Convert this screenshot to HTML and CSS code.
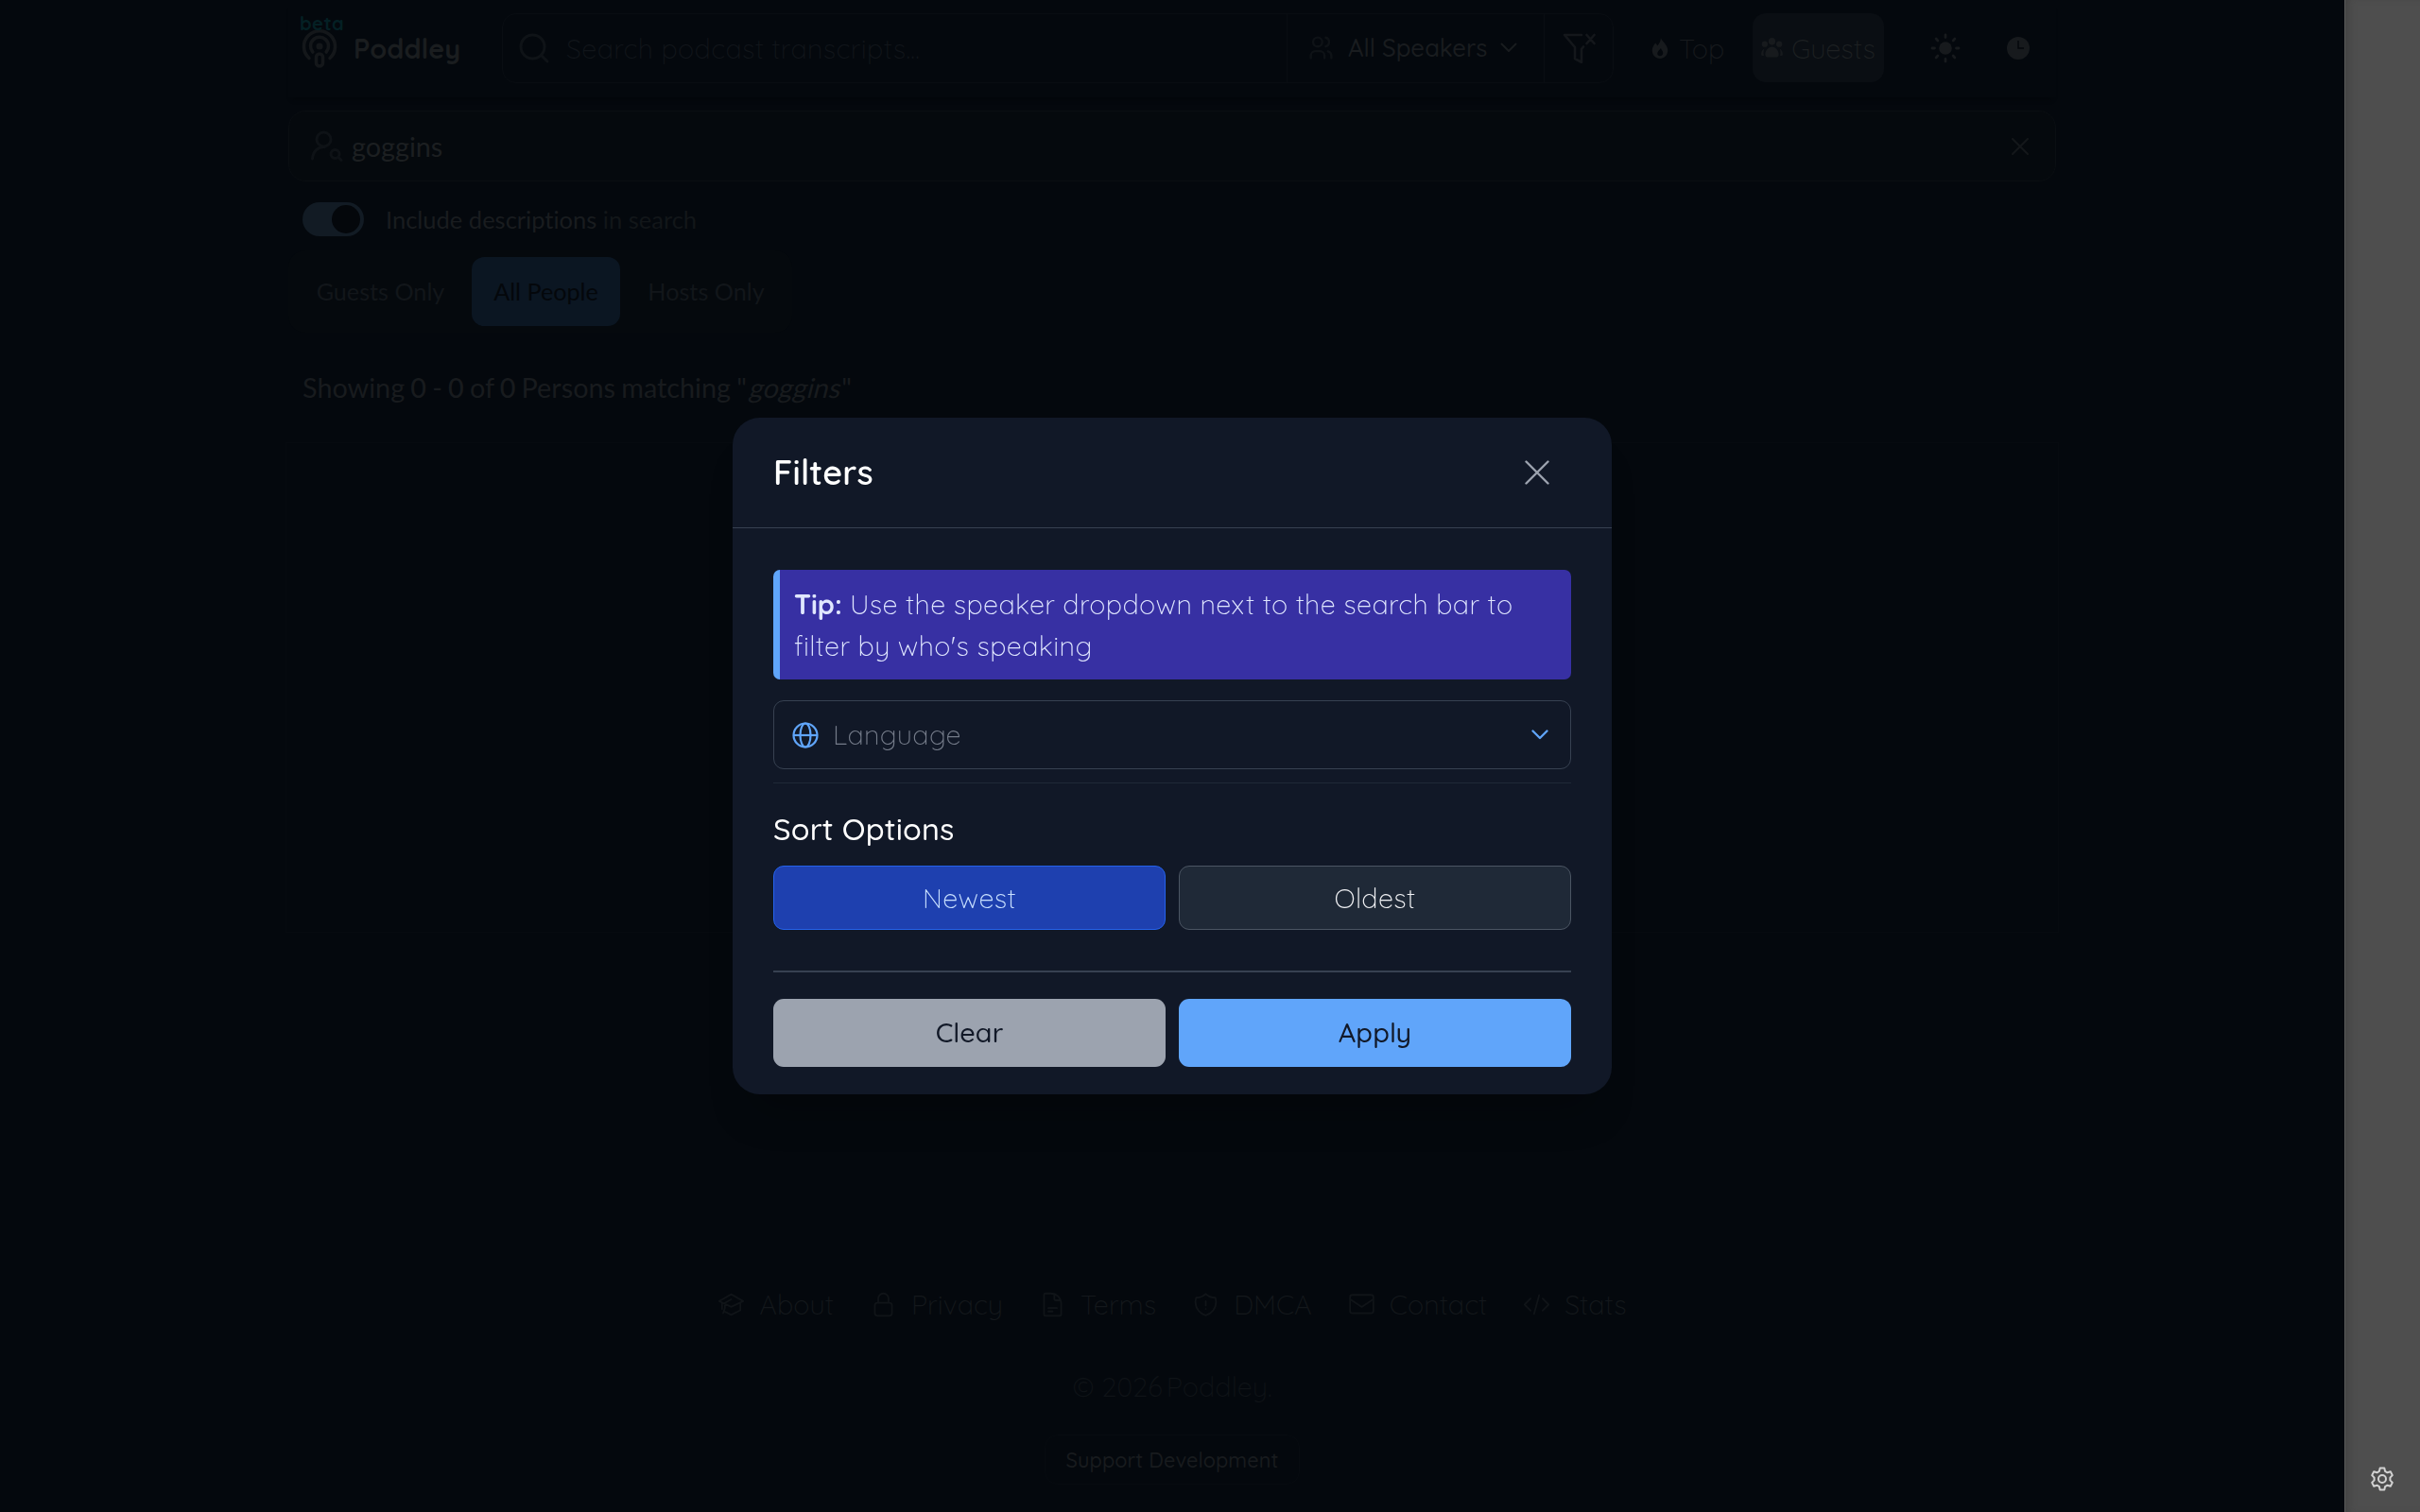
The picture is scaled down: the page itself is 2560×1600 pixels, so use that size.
FILE: index.html
```html
<!DOCTYPE html>
<html lang="en">
<head>
    <meta charset="UTF-8">
    <meta name="viewport" content="width=device-width, initial-scale=1.0">
    <title>Poddley</title>
    <link rel="stylesheet" href="styles.css">
</head>
<body>
    <div class="page">
        <header class="navbar">
            <a class="brand">
                <span class="logo">
                    <span class="beta">beta</span>
                    <svg width="38" height="42" viewBox="0 0 38 42" fill="none" stroke="currentColor" stroke-width="3.6" stroke-linecap="round">
                        <path d="M8 31.5A16.5 16.5 0 1 1 30 31.5"/>
                        <path d="M11.8 25A9.5 9.5 0 1 1 26.2 25"/>
                        <circle cx="19" cy="19" r="3.6" fill="currentColor" stroke="none"/>
                        <rect x="15.5" y="27" width="7" height="13" rx="3.5"/>
                    </svg>
                </span>
                <span class="brand-name">Poddley</span>
            </a>
            <div class="search-bar">
                <div class="search-input">
                    <svg width="34" height="34" viewBox="0 0 34 34" fill="none" stroke="currentColor" stroke-width="3" stroke-linecap="round">
                        <circle cx="15.5" cy="15.5" r="12.5"/>
                        <path d="M24.5 24.5L31 31"/>
                    </svg>
                    <span>Search podcast transcripts...</span>
                </div>
                <div class="speaker-select">
                    <svg class="dim" width="29" height="29" viewBox="0 0 24 24" fill="none" stroke="currentColor" stroke-width="2" stroke-linecap="round" stroke-linejoin="round">
                        <circle cx="9" cy="7" r="4"/>
                        <path d="M3 21v-2a4 4 0 0 1 4-4h4a4 4 0 0 1 4 4v2M16 3.13a4 4 0 0 1 0 7.75M21 21v-2a4 4 0 0 0-3-3.85"/>
                    </svg>
                    <span>All Speakers</span>
                    <svg width="18" height="11" viewBox="0 0 18 11" fill="none" stroke="currentColor" stroke-width="2" stroke-linecap="round" stroke-linejoin="round">
                        <path d="M1.5 1.5L9 9l7.5-7.5"/>
                    </svg>
                </div>
                <div class="filter-button">
                    <svg width="36" height="32" viewBox="0 0 36 32" fill="none" stroke="currentColor" stroke-width="2.6" stroke-linecap="round" stroke-linejoin="round">
                        <path d="M20 2H2l11 13v12l7 4V17l2-2.5M25.5 2l8 9M33.5 2l-8 9"/>
                    </svg>
                </div>
            </div>
            <nav class="nav-links">
                <a class="nav-link">
                    <svg width="22" height="22" viewBox="0 0 24 24" fill="currentColor">
                        <path fill-rule="evenodd" d="M13 0c1 4 8 8 8 14.500C21 20 17 24 12 24s-9-4-9-9.500C3 11 5 8 7 6l2 3c2-2 4-5 4-9zm0 12c-1 2-4 3.500-4 6 0 2 1.400 3 3 3s3.500-1.200 3.500-3.500S13.500 14 13 12z"/>
                    </svg>
                    Top
                </a>
                <a class="nav-link active">
                    <svg width="23" height="21" viewBox="0 0 24 22" fill="currentColor">
                        <ellipse cx="12" cy="4" rx="3.8" ry="4"/>
                        <ellipse cx="4" cy="7" rx="3.3" ry="3.3"/>
                        <ellipse cx="20" cy="7" rx="3.3" ry="3.3"/>
                        <path d="M12 10c4 0 7.500 4 7.500 8.500 0 2-1.500 3-3 3h-9c-1.500 0-3-1-3-3C4.500 14 8 10 12 10zM3.500 12C1.500 13 0 15.500 0 18c0 1.500 1 2 3 2-.7-3-.5-5.500.5-8zM20.500 12c2 1 3.500 3.500 3.500 6 0 1.500-1 2-3 2 .7-3 .5-5.500-.5-8z"/>
                    </svg>
                    Guests
                </a>
            </nav>
            <svg class="theme-icon" width="32" height="32" viewBox="0 0 32 32" fill="none" stroke="currentColor" stroke-width="2.8" stroke-linecap="round">
                <circle cx="16" cy="16" r="6.8" fill="currentColor" stroke="none"/>
                <path d="M16 2v2.500M16 27.500V30M2 16h2.500M27.500 16H30M6.100 6.100l1.800 1.800M24.100 24.100l1.800 1.800M6.100 25.900l1.800-1.800M24.100 7.900l1.800-1.800"/>
            </svg>
            <svg class="history-icon" width="24" height="24" viewBox="0 0 24 24">
                <circle cx="12" cy="12" r="12" fill="currentColor"/>
                <path d="M12 4v8h6" fill="none" stroke="#04070b" stroke-width="1.5"/>
            </svg>
        </header>

        <main>
            <div class="person-search">
                <svg class="dim" width="35" height="34" viewBox="0 0 35 34" fill="none" stroke="currentColor" stroke-width="3" stroke-linecap="round" stroke-linejoin="round">
                    <circle cx="14.5" cy="9.5" r="7.5"/>
                    <path d="M2.5 30c.5-8 6-13 13-12.500"/>
                    <circle cx="26.5" cy="25" r="4.5"/>
                    <path d="M30 28.500l3 3"/>
                </svg>
                <span>goggins</span>
                <svg class="clear-icon" width="20" height="20" viewBox="0 0 20 20" fill="none" stroke="currentColor" stroke-width="2.2" stroke-linecap="round">
                    <path d="M2 2l16 16M18 2L2 18"/>
                </svg>
            </div>
            <div class="toggle-row">
                <span class="toggle"></span>
                <span><b>Include descriptions</b> in search</span>
            </div>
            <div class="tabs">
                <button class="tab">Guests Only</button>
                <button class="tab selected">All People</button>
                <button class="tab">Hosts Only</button>
            </div>
            <p class="summary">Showing <b>0</b> - <b>0</b> of <b>0</b> Persons matching "<i>goggins</i>"</p>
            <div class="results"></div>
        </main>

        <footer>
            <div class="footer-links">
                <a>
                    <svg width="29" height="29" viewBox="0 0 24 24" fill="none" stroke="currentColor" stroke-width="1.5" stroke-linecap="round" stroke-linejoin="round">
                        <path d="M12 3L1.500 9 12 14l10.500-5zM4 10.500V16M20 10.500V17l-8 4-6-3M12 7.500L6.500 10.500V15L5 19.500"/>
                    </svg>
                    About
                </a>
                <a>
                    <svg width="29" height="29" viewBox="0 0 24 24" fill="none" stroke="currentColor" stroke-width="1.5" stroke-linecap="round" stroke-linejoin="round">
                        <path d="M16.500 10.500V6.750a4.500 4.500 0 1 0-9 0v3.750m-.750 11.250h10.500a2.250 2.250 0 0 0 2.250-2.250v-6.750a2.250 2.250 0 0 0-2.250-2.250H6.750a2.250 2.250 0 0 0-2.250 2.250v6.750a2.250 2.250 0 0 0 2.250 2.250z"/>
                    </svg>
                    Privacy
                </a>
                <a>
                    <svg width="29" height="29" viewBox="0 0 24 24" fill="none" stroke="currentColor" stroke-width="1.5" stroke-linecap="round" stroke-linejoin="round">
                        <path d="M19.500 11.250V20.600c0 .6-.5 1.150-1.100 1.150H5.600c-.6 0-1.100-.5-1.100-1.150V3.400c0-.6.5-1.150 1.100-1.150h4.900a9 9 0 0 1 9 9zM13.500 2.800v4c0 1 .6 1.500 1.500 1.500h4M8.250 15h7.500M8.250 18H12"/>
                    </svg>
                    Terms
                </a>
                <a>
                    <svg width="29" height="29" viewBox="0 0 24 24" fill="none" stroke="currentColor" stroke-width="1.5" stroke-linecap="round" stroke-linejoin="round">
                        <path d="M12 9v3.750m0-10.036A11.959 11.959 0 0 1 3.598 6 11.990 11.990 0 0 0 3 9.750c0 5.592 3.824 10.290 9 11.622 5.176-1.332 9-6.030 9-11.622 0-1.310-.210-2.570-.598-3.750h-.152c-3.196 0-6.100-1.249-8.250-3.286zm0 13.036h.008v.008H12v-.008z"/>
                    </svg>
                    DMCA
                </a>
                <a>
                    <svg width="29" height="29" viewBox="0 0 24 24" fill="none" stroke="currentColor" stroke-width="1.5" stroke-linecap="round" stroke-linejoin="round">
                        <rect x="1.8" y="3.5" width="20.4" height="16" rx="2"/>
                        <path d="M2 7.500l10 6.500 10-6.500"/>
                    </svg>
                    Contact
                </a>
                <a>
                    <svg width="29" height="29" viewBox="0 0 24 24" fill="none" stroke="currentColor" stroke-width="1.5" stroke-linecap="round" stroke-linejoin="round">
                        <path d="M17.250 6.750L22.500 12l-5.250 5.250m-10.500 0L1.500 12l5.250-5.250m7.500-3l-4.500 16.500"/>
                    </svg>
                    Stats
                </a>
            </div>
            <p class="copyright">© 2026<span>Poddley.</span></p>
            <a class="support">Support Development</a>
        </footer>
    </div>

    <aside class="rail">
        <svg width="24" height="26" viewBox="0 0 24 26" fill="none" stroke="currentColor" stroke-width="2" stroke-linejoin="round">
            <path d="M9.700 1.500h4.600l.8 3.400 2.400 1.400 3.300-1.100 2 3.900-2.400 2.500v2.800l2.400 2.500-2 3.900-3.300-1.100-2.400 1.400-.8 3.400H9.700l-.8-3.400-2.400-1.400-3.300 1.100-2-3.900 2.400-2.500v-2.800L1.200 9.100l2-3.900 3.300 1.100 2.400-1.400z"/>
            <circle cx="12" cy="13" r="4"/>
        </svg>
    </aside>

    <div class="overlay">
        <div class="modal">
            <div class="modal-header">
                <h2>Filters</h2>
                <svg width="26" height="26" viewBox="0 0 26 26" fill="none" stroke="currentColor" stroke-width="2.4" stroke-linecap="round">
                    <path d="M1.500 1.500l23 23M24.500 1.500l-23 23"/>
                </svg>
            </div>
            <div class="modal-body">
                <div class="tip"><b>Tip:</b> Use the speaker dropdown next to the search bar to filter by who's speaking</div>
                <div class="language">
                    <svg width="28" height="28" viewBox="0 0 28 28" fill="none" stroke="currentColor" stroke-width="2.2">
                        <circle cx="14" cy="14" r="12.5"/>
                        <ellipse cx="14" cy="14" rx="5.5" ry="12.5"/>
                        <path d="M1.500 14h25"/>
                    </svg>
                    <span>Language</span>
                    <svg width="18" height="11" viewBox="0 0 18 11" fill="none" stroke="currentColor" stroke-width="2.3" stroke-linecap="round" stroke-linejoin="round">
                        <path d="M1.500 1.500L9 9l7.500-7.500"/>
                    </svg>
                </div>
                <div class="sort">
                    <h3>Sort Options</h3>
                    <div class="button-row">
                        <button class="sort-button newest">Newest</button>
                        <button class="sort-button">Oldest</button>
                    </div>
                </div>
                <div class="actions button-row">
                    <button class="clear">Clear</button>
                    <button class="apply">Apply</button>
                </div>
            </div>
        </div>
    </div>
</body>
</html>
```
FILE: styles.css
```css
* {
    box-sizing: border-box;
}
body {
    margin: 0;
    height: 1600px;
    display: flex;
    overflow: hidden;
    background-color: #04080d;
    font-family: Quicksand, Lato, sans-serif;
    font-size: 28.8px;
    font-weight: 300;
    color: #171a1d;
}
svg {
    display: block;
    flex-shrink: 0;
}
h2, h3, p {
    margin: 0;
}
button {
    font-family: inherit;
    font-size: inherit;
    font-weight: inherit;
    letter-spacing: inherit;
    border: none;
    padding: 0;
}
.page {
    width: 2480px;
    display: flex;
    flex-direction: column;
    align-items: center;
}

/* top bar */
.navbar {
    width: 1870px;
    height: 103px;
    padding-bottom: 2px;
    display: flex;
    align-items: center;
    box-shadow: 0 6px 4px -4px #03060a;
}
.brand {
    width: 226px;
    padding-left: 14px;
    display: flex;
    align-items: center;
    gap: 17px;
}
.logo {
    position: relative;
    color: #14171a;
}
.beta {
    position: absolute;
    top: -17px;
    left: -2px;
    font-size: 20.2px;
    font-weight: 700;
    line-height: 24px;
    letter-spacing: 0.4px;
    color: #042024;
}
.brand-name {
    font-weight: 700;
    letter-spacing: 0.1px;
    color: #1a1d1f;
}
.search-bar {
    width: 1176px;
    height: 74px;
    display: flex;
    border: 1px solid #090d12;
    border-radius: 15px;
}
.search-input {
    flex: 1;
    display: flex;
    align-items: center;
    gap: 17px;
    padding-left: 16px;
    letter-spacing: 0.35px;
    color: #11151a;
}
.search-input svg {
    color: #0f1317;
}
.speaker-select {
    width: 272px;
    display: flex;
    align-items: center;
    gap: 14px;
    padding-left: 21px;
    border-left: 1px solid #090d12;
    font-size: 25.6px;
    font-weight: 500;
    color: #191c1f;
}
.speaker-select span {
    padding-bottom: 2px;
}
.dim {
    color: #0e1216;
}
.filter-button {
    width: 73px;
    display: flex;
    align-items: center;
    justify-content: center;
    padding-left: 2px;
    border-left: 1px solid #090d12;
    color: #14171b;
}
.nav-links {
    display: flex;
    gap: 18px;
    margin-left: 26px;
}
.nav-link {
    height: 73px;
    display: flex;
    align-items: center;
    gap: 9px;
    padding: 0 12px;
}
.nav-link.active {
    width: 139px;
    padding: 0 0 0 9px;
    border-radius: 14px;
    background-color: #0a0e13;
    color: #1d2022;
}
.nav-link svg {
    color: #171a1d;
}
.theme-icon {
    margin-left: 49px;
}
.history-icon {
    margin-left: 49px;
}

/* people search */
main {
    width: 1870px;
    font-family: Lato, sans-serif;
    font-weight: 400;
    font-variant-ligatures: none;
}
.person-search {
    height: 75px;
    margin-top: 14px;
    display: flex;
    align-items: center;
    padding: 0 27px 0 22px;
    gap: 9px;
    border: 1px solid #0a0e12;
    border-radius: 18px;
    background-color: #05090d;
    color: #1c1f21;
}
.clear-icon {
    margin-left: auto;
    color: #14171a;
}
.toggle-row {
    margin-top: 22px;
    padding-left: 15px;
    height: 36px;
    display: flex;
    align-items: center;
    gap: 23px;
    font-size: 25.5px;
    color: #121619;
}
.toggle-row b {
    font-weight: 400;
    color: #191c1f;
}
.toggle {
    width: 65px;
    height: 36px;
    padding: 3px 4px;
    border-radius: 18px;
    background-color: #121b24;
}
.toggle::after {
    content: "";
    display: block;
    width: 30px;
    height: 30px;
    margin-left: auto;
    border-radius: 50%;
    background-color: #04070b;
}
.tabs {
    width: 533px;
    height: 87px;
    margin-top: 15px;
    padding: 7px 7px 7px 8px;
    display: flex;
    gap: 7px;
    border-radius: 18px;
    background-color: #05090d;
}
.tab {
    width: 179px;
    padding: 0 0 2px;
    border-radius: 13px;
    background: none;
    font-size: 25.2px;
    color: #12161a;
}
.tab:last-child {
    width: 168px;
}
.tab.selected {
    width: 157px;
    background-color: #0b1622;
    color: #04070b;
}
.summary {
    margin: 36px 0 0 15px;
    line-height: 44px;
    word-spacing: -1.2px;
    color: #181b1e;
}
.summary b {
    font-weight: 500;
}
.summary i {
    display: inline-block;
    margin-left: 4px;
    font-style: normal;
    transform: skewX(-14deg);
}
.results {
    height: 519px;
    margin: 36px -3px 0;
    border: 1px solid #060a0f;
}

/* footer */
footer {
    display: flex;
    flex-direction: column;
    align-items: center;
    color: #14181c;
}
.footer-links {
    height: 44px;
    margin-top: 371px;
    display: flex;
    gap: 38px;
    letter-spacing: 0.05px;
}
.footer-links a {
    display: flex;
    align-items: center;
    gap: 15px;
}
.footer-links svg {
    color: #101418;
}
.copyright {
    margin-top: 43px;
    line-height: 44px;
    letter-spacing: 0.1px;
    color: #0f1317;
}
.copyright span {
    margin-left: 4px;
}
.support {
    width: 270px;
    height: 53px;
    margin-top: 29px;
    border: 1px solid #070b10;
    border-radius: 14px;
    text-align: center;
    font-size: 21.6px;
    font-weight: 500;
    line-height: 51px;
    letter-spacing: 0.1px;
    color: #181b1e;
}

/* right rail */
.rail {
    width: 80px;
    display: flex;
    align-items: flex-end;
    justify-content: center;
    padding-bottom: 22px;
    background-color: #4e4e4e;
    box-shadow: inset 1px 0 0 #5a5a5a, inset 8px 0 8px -4px #424242;
    color: #d2d2d2;
}

/* filters dialog */
.overlay {
    position: fixed;
    inset: 0 80px 0 0;
    display: flex;
    align-items: center;
    justify-content: center;
}
.modal {
    width: 930px;
    height: 716px;
    border-radius: 28.8px;
    background-color: #111827;
    box-shadow: 0 36px 45px -22px rgba(0, 0, 0, 0.3);
    letter-spacing: 0.36px;
}
.modal-header {
    height: 117px;
    display: flex;
    align-items: center;
    justify-content: space-between;
    padding: 0 66px 0 43px;
    border-bottom: 1px solid #374151;
    color: #9ca3af;
}
.modal-header h2 {
    padding-bottom: 2px;
    font-size: 36px;
    font-weight: 600;
    letter-spacing: 0.2px;
    color: #fff;
}
.modal-body {
    padding: 44px 43px 0;
}
.tip {
    height: 116px;
    padding: 14px 16px 14px 15px;
    border-left: 7px solid #60a5fa;
    border-radius: 7px;
    background-color: #3730a3;
    line-height: 44px;
    color: #e0e7ff;
}
.tip b {
    font-weight: 700;
    letter-spacing: 0;
}
.language {
    height: 73px;
    margin-top: 22px;
    display: flex;
    align-items: center;
    gap: 15px;
    padding: 0 23px 0 19px;
    border: 1px solid #374151;
    border-radius: 11px;
    color: #60a5fa;
}
.language span {
    flex: 1;
    padding-bottom: 1px;
    color: #747b89;
}
.sort {
    margin-top: 14px;
    border-top: 1px solid #1f2937;
    padding-top: 26px;
}
.sort h3 {
    font-size: 32.4px;
    font-weight: 500;
    line-height: 44px;
    letter-spacing: 0.15px;
    color: #fff;
}
.button-row {
    display: grid;
    grid-template-columns: 1fr 1fr;
    gap: 14px;
}
.sort .button-row {
    margin-top: 17px;
}
.sort-button {
    height: 68px;
    border: 1px solid #4b5563;
    border-radius: 11px;
    background-color: #1f2937;
    color: #f0f1f4;
}
.sort-button.newest {
    border-color: #2563eb;
    background-color: #1e40af;
    color: #c8e0ff;
}
.actions {
    margin-top: 43px;
    padding-top: 28px;
    border-top: 2px solid #374151;
}
.clear, .apply {
    height: 72px;
    padding-bottom: 2px;
    border-radius: 11px;
    font-weight: 500;
    letter-spacing: 0.1px;
    color: #111827;
}
.clear {
    background-color: #9ca3af;
}
.apply {
    background-color: #60a5fa;
}
```
